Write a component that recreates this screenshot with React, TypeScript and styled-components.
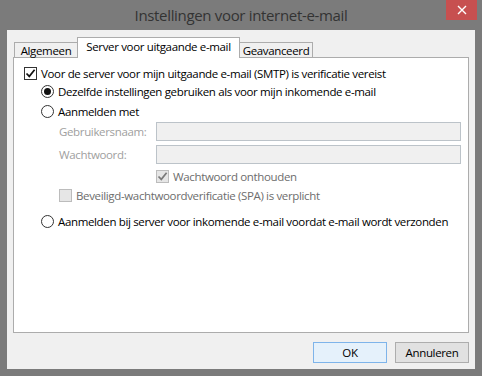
import React from 'react'
import styled, { createGlobalStyle } from 'styled-components'

const GlobalStyle = createGlobalStyle`
  html, body {
    margin: 0;
    padding: 0;
    background: #7b7b7b;
  }
  * {
    box-sizing: border-box;
  }
`

const FONT = `'Open Sans', 'Noto Sans', 'Liberation Sans', sans-serif`

export default function App() {
  return (
    <>
      <GlobalStyle />
      <Window>
        <TitleBar>
          <span />
          <Title>Instellingen voor internet-e-mail</Title>
          <CloseButton>
            <svg width="10" height="10" viewBox="0 0 10 10">
              <path d="M1 1 L9 9 M9 1 L1 9" stroke="#fff" strokeWidth="1.4" />
            </svg>
          </CloseButton>
        </TitleBar>

        <Client>
          <TabRow>
            <Tab width={64}>Algemeen</Tab>
            <Tab width={163} selected>Server voor uitgaande e-mail</Tab>
            <Tab width={74}>Geavanceerd</Tab>
          </TabRow>

          <Panel>
            <Row indent={10} top={0}>
              <CheckBox checked />
              <Label>Voor de server voor mijn uitgaande e-mail (SMTP) is verificatie vereist</Label>
            </Row>
            <Row indent={27} top={0}>
              <Radio checked />
              <Label>Dezelfde instellingen gebruiken als voor mijn inkomende e-mail</Label>
            </Row>
            <Row indent={27} top={2}>
              <Radio />
              <Label>Aanmelden met</Label>
            </Row>
            <FieldRow top={2}>
              <FieldLabel>Gebruikersnaam:</FieldLabel>
              <TextInput />
            </FieldRow>
            <FieldRow top={4}>
              <FieldLabel>Wachtwoord:</FieldLabel>
              <TextInput />
            </FieldRow>
            <Row indent={142} top={3}>
              <CheckBox checked disabled />
              <Label disabled>Wachtwoord onthouden</Label>
            </Row>
            <Row indent={45} top={1}>
              <CheckBox disabled />
              <Label disabled>Beveiligd-wachtwoordverificatie (SPA) is verplicht</Label>
            </Row>
            <Row indent={27} top={8}>
              <Radio />
              <Label>Aanmelden bij server voor inkomende e-mail voordat e-mail wordt verzonden</Label>
            </Row>
          </Panel>

          <ButtonRow>
            <Button primary>OK</Button>
            <Button>Annuleren</Button>
          </ButtonRow>
        </Client>
      </Window>
    </>
  )
}

function CheckBox({ checked, disabled }: { checked?: boolean; disabled?: boolean }) {
  return (
    <Box disabled={disabled}>
      {checked && (
        <svg width="11" height="11" viewBox="0 0 11 11">
          <path
            d="M1.5 5.5 L4.3 8.4 L9.6 1.8"
            fill="none"
            stroke={disabled ? '#7a7a7a' : '#111'}
            strokeWidth="1.7"
          />
        </svg>
      )}
    </Box>
  )
}

const Window = styled.div`
  width: 482px;
  height: 376px;
  background: #7b7b7b;
  display: flex;
  flex-direction: column;
  font-family: ${FONT};
  font-size: 11.5px;
  letter-spacing: -0.35px;
`

const TitleBar = styled.div`
  height: 30px;
  display: grid;
  grid-template-columns: 1fr auto 1fr;
  align-items: start;
`

const Title = styled.div`
  font-size: 15px;
  letter-spacing: -0.33px;
  color: #333;
  line-height: 30px;
`

const CloseButton = styled.div`
  justify-self: end;
  width: 31px;
  height: 20px;
  margin-right: 5px;
  background: #c75050;
  display: flex;
  align-items: center;
  justify-content: center;
`

const Client = styled.div`
  flex: 1;
  margin: 0 7px 7px 7px;
  background: #f0f0f0;
  padding: 7px 6px 0 6px;
  display: flex;
  flex-direction: column;
`

const TabRow = styled.div`
  height: 20px;
  display: flex;
  align-items: flex-end;
  padding-left: 2px;
`

const Tab = styled.div<{ selected?: boolean; width: number }>`
  position: relative;
  width: ${p => p.width}px;
  height: ${p => (p.selected ? 21 : 15)}px;
  margin-bottom: ${p => (p.selected ? -1 : 0)}px;
  margin-left: -1px;
  z-index: ${p => (p.selected ? 1 : 0)};
  border: 1px solid #acacac;
  border-bottom: none;
  background: ${p => (p.selected ? '#fff' : '#f0f0f0')};
  color: #000;
  display: flex;
  align-items: flex-start;
  justify-content: center;
  line-height: ${p => (p.selected ? '17px' : '15px')};
  white-space: nowrap;
`

const Panel = styled.div`
  height: 276px;
  background: #fff;
  border: 1px solid #acacac;
  padding-top: 6px;
  display: flex;
  flex-direction: column;
`

const Row = styled.div<{ indent: number; top: number }>`
  height: 18px;
  margin-top: ${p => p.top}px;
  padding-left: ${p => p.indent}px;
  display: flex;
  align-items: center;
  gap: 4px;
`

const Label = styled.span<{ disabled?: boolean }>`
  color: ${p => (p.disabled ? '#6d6d6d' : '#000')};
  white-space: nowrap;
`

const Box = styled.div<{ disabled?: boolean }>`
  width: 13px;
  height: 13px;
  flex: none;
  border: 1px solid ${p => (p.disabled ? '#bcbcbc' : '#333')};
  background: ${p => (p.disabled ? '#e6e6e6' : '#fff')};
  display: flex;
  align-items: center;
  justify-content: center;
`

const Radio = styled.div<{ checked?: boolean }>`
  width: 13px;
  height: 13px;
  flex: none;
  border-radius: 50%;
  border: 1px solid #333;
  background: #fff;
  display: flex;
  align-items: center;
  justify-content: center;

  &::after {
    content: '';
    display: ${p => (p.checked ? 'block' : 'none')};
    width: 7px;
    height: 7px;
    border-radius: 50%;
    background: #111;
  }
`

const FieldRow = styled.div<{ top: number }>`
  height: 19px;
  margin-top: ${p => p.top}px;
  padding-left: 45px;
  padding-right: 7px;
  display: flex;
  align-items: center;
`

const FieldLabel = styled.span`
  width: 97px;
  flex: none;
  color: #a0a0a0;
  white-space: nowrap;
`

const TextInput = styled.div`
  flex: 1;
  height: 19px;
  background: #f0f0f0;
  border: 1px solid #bcc3c9;
`

const ButtonRow = styled.div`
  display: flex;
  justify-content: flex-end;
  gap: 8px;
  margin-top: 9px;
`

const Button = styled.div<{ primary?: boolean }>`
  width: 74px;
  height: 21px;
  border: 1px solid ${p => (p.primary ? '#7eb4ea' : '#adadad')};
  background: ${p => (p.primary ? '#e5f1fb' : '#e1e1e1')};
  color: #000;
  display: flex;
  align-items: center;
  justify-content: center;
`
